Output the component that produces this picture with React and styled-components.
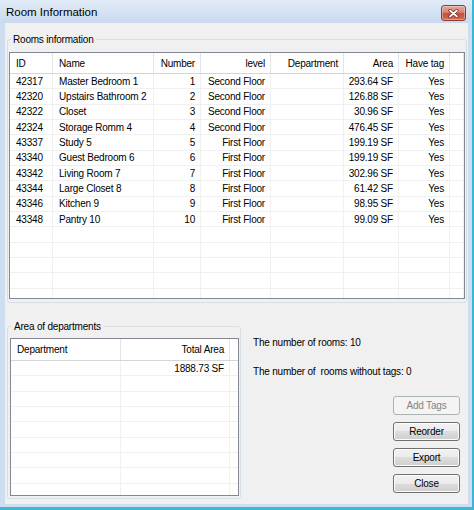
import React from "react";
import styled, { createGlobalStyle } from "styled-components";

const GlobalStyle = createGlobalStyle`
  * { box-sizing: border-box; }
  html, body { margin: 0; padding: 0; background: #ffffff; }
  body {
    font-family: "Liberation Sans", Arial, sans-serif;
    font-size: 10px;
    letter-spacing: -0.2px;
    color: #000;
  }
`;

const Window = styled.div`
  width: 474px;
  height: 510px;
  display: flex;
  flex-direction: column;
  background: #cddef1;
  border-right: 2px solid #3fb4d6;
  border-bottom: 3px solid #3dbad3;
  overflow: hidden;
`;

const TitleBar = styled.div`
  height: 23px;
  flex: none;
  display: flex;
  align-items: flex-start;
  justify-content: space-between;
  padding: 0 6px;
  background: linear-gradient(#e1ebf7, #c8daef);
`;

const Title = styled.span`
  font-size: 11.5px;
  letter-spacing: 0;
  line-height: 13px;
  margin-top: 6px;
`;

const CloseButton = styled.button`
  width: 25px;
  height: 16px;
  margin-top: 5px;
  padding: 0;
  display: flex;
  align-items: center;
  justify-content: center;
  border: 1px solid #8d3b30;
  border-radius: 3px;
  background: linear-gradient(#eaa899 0%, #d7826f 45%, #c64c36 55%, #d0705a 100%);
  box-shadow: inset 0 0 0 1px rgba(255, 255, 255, 0.35);
`;

const Client = styled.div`
  flex: 1;
  margin: 0 4px 3px 5px;
  background: #f0f0f0;
  padding: 10px 1px 0 2px;
  display: flex;
  flex-direction: column;
`;

const Group = styled.fieldset`
  margin: 0;
  height: ${(p) => p.$h}px;
  padding: ${(p) => p.$pad};
  border: 1px solid #d5dfe5;
  border-radius: 3px;
  min-width: 0;
`;

const Legend = styled.legend`
  padding: 0 2px;
  margin-left: 2px;
  line-height: 13px;
`;

const LowerRow = styled.div`
  margin-top: 17px;
  display: grid;
  grid-template-columns: 234px 1fr;
`;

const List = styled.div`
  height: ${(p) => p.$h}px;
  border: 1px solid #828790;
  background: #fff;
  overflow: hidden;
`;

const Row = styled.div`
  display: grid;
  grid-template-columns: ${(p) => p.$cols};
  height: ${(p) => p.$h}px;
  border-bottom: 1px solid ${(p) => (p.$head ? "#d5d5d5" : "#f0f0f0")};
`;

const Cell = styled.div`
  display: flex;
  align-items: center;
  justify-content: ${(p) => (p.$align === "left" ? "flex-start" : "flex-end")};
  padding: ${(p) => (p.$align === "left" ? "0 4px 0 6px" : "0 5px 0 4px")};
  border-right: 1px solid ${(p) => (p.$head ? "#e3e5e8" : "#f0f0f0")};
  white-space: nowrap;
  overflow: hidden;
`;

const RightPanel = styled.div`
  padding: 16px 7px 0 12px;
  display: flex;
  flex-direction: column;
`;

const Info = styled.div`
  line-height: 13px;
  white-space: pre;
  margin-top: ${(p) => p.$gap || 0}px;
`;

const ButtonColumn = styled.div`
  margin-top: 18px;
  display: flex;
  flex-direction: column;
  align-items: flex-end;
  gap: 7px;
`;

const Button = styled.button`
  width: 67px;
  height: 19px;
  padding: 0;
  font: inherit;
  letter-spacing: inherit;
  border-radius: 3px;
  border: 1px solid ${(p) => (p.disabled ? "#adb2b5" : "#707070")};
  background: ${(p) =>
    p.disabled
      ? "#f4f4f4"
      : "linear-gradient(#f2f2f2 0%, #ebebeb 50%, #dddddd 50%, #cfcfcf 100%)"};
  box-shadow: inset 0 0 0 1px ${(p) => (p.disabled ? "#f4f4f4" : "#fcfcfc")};
  color: ${(p) => (p.disabled ? "#838383" : "#000")};
`;

const roomColumns = [
  { title: "ID", w: 43, align: "left" },
  { title: "Name", w: 101, align: "left" },
  { title: "Number", w: 47 },
  { title: "level", w: 70 },
  { title: "Department", w: 73 },
  { title: "Area", w: 55 },
  { title: "Have tag", w: 51 },
];

const rooms = [
  ["42317", "Master Bedroom 1", "1", "Second Floor", "", "293.64 SF", "Yes"],
  ["42320", "Upstairs Bathroom 2", "2", "Second Floor", "", "126.88 SF", "Yes"],
  ["42322", "Closet", "3", "Second Floor", "", "30.96 SF", "Yes"],
  ["42324", "Storage Romm 4", "4", "Second Floor", "", "476.45 SF", "Yes"],
  ["43337", "Study 5", "5", "First Floor", "", "199.19 SF", "Yes"],
  ["43340", "Guest Bedroom 6", "6", "First Floor", "", "199.19 SF", "Yes"],
  ["43342", "Living Room 7", "7", "First Floor", "", "302.96 SF", "Yes"],
  ["43344", "Large Closet 8", "8", "First Floor", "", "61.42 SF", "Yes"],
  ["43346", "Kitchen 9", "9", "First Floor", "", "98.95 SF", "Yes"],
  ["43348", "Pantry 10", "10", "First Floor", "", "99.09 SF", "Yes"],
];

const deptColumns = [
  { title: "Department", w: 110, align: "left" },
  { title: "Total Area", w: 109 },
];

const departments = [["", "1888.73 SF"]];

function ListView({ columns, rows, height, headerHeight, rowCount }) {
  const cols = columns.map((c) => `${c.w}px`).join(" ") + " 1fr";
  const filled = [...rows];
  while (filled.length < rowCount) filled.push(columns.map(() => ""));

  return (
    <List $h={height}>
      <Row $head $cols={cols} $h={headerHeight}>
        {columns.map((c) => (
          <Cell key={c.title} $head $align={c.align}>
            {c.title}
          </Cell>
        ))}
        <Cell $head />
      </Row>
      {filled.map((r, i) => (
        <Row key={i} $cols={cols} $h={15.33}>
          {r.map((v, j) => (
            <Cell key={j} $align={columns[j].align}>
              {v}
            </Cell>
          ))}
          <Cell />
        </Row>
      ))}
    </List>
  );
}

export default function App() {
  return (
    <>
      <GlobalStyle />
      <Window>
        <TitleBar>
          <Title>Room Information</Title>
          <CloseButton aria-label="Close">
            <svg width="11" height="9" viewBox="0 0 11 9">
              <path d="M2 1.5 L9 7.5 M9 1.5 L2 7.5" stroke="#6a231a" strokeWidth="3.2" strokeLinecap="round" />
              <path d="M2 1.5 L9 7.5 M9 1.5 L2 7.5" stroke="#ffffff" strokeWidth="1.8" strokeLinecap="round" />
            </svg>
          </CloseButton>
        </TitleBar>
        <Client>
          <Group $h={270} $pad="6px 1px 3px 1px">
            <Legend>Rooms information</Legend>
            <ListView
              columns={roomColumns}
              rows={rooms}
              height={247}
              headerHeight={21}
              rowCount={15}
            />
          </Group>
          <LowerRow>
            <Group $h={179} $pad="5px 1px 2px 2px">
              <Legend>Area of departments</Legend>
              <ListView
                columns={deptColumns}
                rows={departments}
                height={158}
                headerHeight={22}
                rowCount={10}
              />
            </Group>
            <RightPanel>
              <Info>The number of rooms: 10</Info>
              <Info $gap={16}>The number of  rooms without tags: 0</Info>
              <ButtonColumn>
                <Button disabled>Add Tags</Button>
                <Button>Reorder</Button>
                <Button>Export</Button>
                <Button>Close</Button>
              </ButtonColumn>
            </RightPanel>
          </LowerRow>
        </Client>
      </Window>
    </>
  );
}
